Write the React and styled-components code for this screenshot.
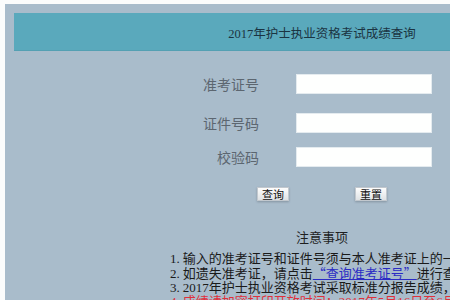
import styled, { createGlobalStyle } from 'styled-components';

const GlobalStyle = createGlobalStyle`
  body {
    margin: 0;
    background: #fbfcfc;
    overflow: hidden;
    font-family: "Liberation Serif", "Noto Sans CJK SC", serif;
  }
`;

const Page = styled.div`
  padding: 4px 0 0 5px;
`;

const Panel = styled.div`
  width: 616px;
  height: 400px;
  padding: 9px;
  background: #a9bccb;
`;

const Header = styled.div`
  height: 38px;
  background: #5aa9bc;
  border-bottom: 1px solid #54a0b3;
  box-sizing: border-box;
  display: flex;
  align-items: center;
  justify-content: center;
  padding-top: 2px;
  font-size: 12.5px;
  color: #1b3442;
`;

const FormRow = styled.div`
  display: grid;
  grid-template-columns: 245px 136px;
  column-gap: 37px;
  align-items: center;
  margin-top: ${(p) => p.$top}px;
  height: ${(p) => p.$h}px;
`;

const Label = styled.label`
  text-align: right;
  font-size: 14px;
  color: #5c6670;
`;

const Input = styled.input`
  height: 100%;
  box-sizing: border-box;
  width: 136px;
  border: 1px solid #e4ebef;
  background: #fefffe;
  padding: 0 3px;
  outline: none;
`;

const Buttons = styled.div`
  display: flex;
  justify-content: center;
  gap: 66px;
  margin-top: 21px;
`;

const Button = styled.button`
  width: 32px;
  height: 14px;
  padding: 0;
  font-family: "Noto Sans CJK SC", sans-serif;
  font-size: 11px;
  line-height: 12px;
  color: #111;
  background: linear-gradient(#fdfdfd, #dfe2e5);
  border: 1px solid #c2c8ce;
  box-shadow: 0 1px 2px rgba(80, 90, 100, 0.4);
`;

const NoticeTitle = styled.div`
  margin-top: 29px;
  text-align: center;
  font-size: 13px;
  line-height: 16px;
  color: #1f1f1f;
`;

const Notes = styled.div`
  margin-top: 6px;
  padding-left: 156px;
  font-size: 13px;
  line-height: 14px;
  white-space: nowrap;
`;

const Note = styled.div`
  color: ${(p) => (p.$red ? '#e0303a' : '#1a1a1a')};
`;

const Num = styled.span`
  margin-right: 3px;
`;

const Link = styled.a`
  font-family: "Noto Sans CJK SC", sans-serif;
  color: #2b2bc4;
  text-decoration: underline;
`;

export default function App() {
  return (
    <>
      <GlobalStyle />
      <Page>
        <Panel>
          <Header>2017年护士执业资格考试成绩查询</Header>
          <FormRow $top={23} $h={18}>
            <Label>准考证号</Label>
            <Input />
          </FormRow>
          <FormRow $top={21} $h={19}>
            <Label>证件号码</Label>
            <Input />
          </FormRow>
          <FormRow $top={15} $h={19}>
            <Label>校验码</Label>
            <Input />
          </FormRow>
          <Buttons>
            <Button>查询</Button>
            <Button>重置</Button>
          </Buttons>
          <NoticeTitle>注意事项</NoticeTitle>
          <Notes>
            <Note><Num>1.</Num>输入的准考证号和证件号须与本人准考证上的一致。</Note>
            <Note>
              <Num>2.</Num>如遗失准考证，请点击<Link href="#">“查询准考证号”</Link>进行查询。
            </Note>
            <Note><Num>3.</Num>2017年护士执业资格考试采取标准分报告成绩，合格线为360分。</Note>
            <Note $red><Num>4.</Num>成绩请加密打印开放时间：2017年5月16日至6月30日。</Note>
          </Notes>
        </Panel>
      </Page>
    </>
  );
}
